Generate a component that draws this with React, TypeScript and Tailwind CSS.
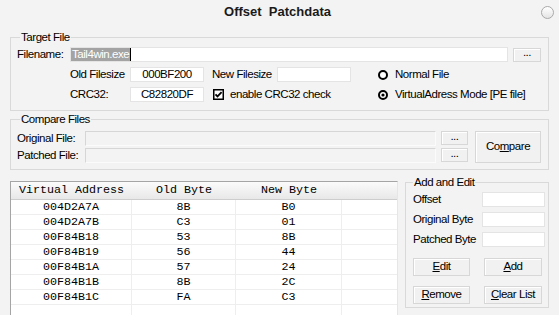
import React from "react";

const UI = "font-['Liberation_Sans',Arial,sans-serif] text-[11.5px] tracking-[-0.45px]";

function Btn({ children, className = "" }: { children: React.ReactNode; className?: string }) {
  return (
    <div
      className={
        "flex items-center justify-center bg-[#f1f1f1] border border-[#d7d7d7] shadow-[inset_1px_1px_0_#ffffff] leading-none whitespace-nowrap " +
        className
      }
    >
      {children}
    </div>
  );
}

function Field({ children, className = "" }: { children?: React.ReactNode; className?: string }) {
  return (
    <div className={"h-[15px] bg-white border border-[#e4e4e4] flex items-center justify-center leading-none " + className}>
      {children}
    </div>
  );
}

function Radio({ checked }: { checked?: boolean }) {
  return (
    <svg width="10" height="10" viewBox="0 0 10 10" className="shrink-0">
      <circle cx="5" cy="5" r="4" fill="white" stroke="black" strokeWidth="2" />
      {checked && <circle cx="5" cy="5" r="1.6" fill="black" />}
    </svg>
  );
}

function Check() {
  return (
    <svg width="11" height="11" viewBox="0 0 11 11" className="shrink-0">
      <rect x="0.75" y="0.75" width="9.5" height="9.5" fill="white" stroke="black" strokeWidth="1.5" />
      <path d="M2.5 5.3 L4.5 7.4 L8.6 3.2" fill="none" stroke="black" strokeWidth="1.8" />
    </svg>
  );
}

export default function App() {
  const rows = [
    ["004D2A7A", "8B", "B0"],
    ["004D2A7B", "C3", "01"],
    ["00F84B18", "53", "8B"],
    ["00F84B19", "56", "44"],
    ["00F84B1A", "57", "24"],
    ["00F84B1B", "8B", "2C"],
    ["00F84B1C", "FA", "C3"],
    ["", "", ""],
  ];
  const mono = "font-['Liberation_Mono','Courier_New',monospace] text-[11.7px] tracking-normal";
  return (
    <div className={"w-[559px] h-[315px] bg-[#f3f3f3] overflow-hidden relative text-black whitespace-nowrap " + UI}>
      {/* title */}
      <div className="h-[30px] pt-[4px] flex justify-center pr-[4px]">
        <span className="font-['Liberation_Sans',sans-serif] font-bold text-[13px] tracking-normal leading-[16px] whitespace-pre text-[#1a1a1a]">
          Offset  Patchdata
        </span>
      </div>
      <div className="absolute left-[541px] top-[6px] w-[13px] h-[13px] rounded-full border border-[#a9a9a9] bg-linear-to-b from-white to-[#e4e4e4]" />

      {/* Target File */}
      <fieldset className="mx-[10px] border border-[#d9d9d9] pl-[6px] pr-[7px] pt-[3px] pb-[8px]">
        <legend className="ml-[3px] px-[1px] leading-[14px]">Target File</legend>
        <div className="flex items-center h-[15px]">
          <div className="w-[53px]">Filename:</div>
          <div className="flex-1 h-[15px] bg-white border border-[#e4e4e4] flex items-stretch">
            <span className="bg-[#a3a3a3] text-white leading-[13px] pl-[1px] pr-[1px]">Tail4win.exe</span>
            <span className="w-[1px] bg-black" />
          </div>
          <Btn className="ml-[5px] w-[28px] h-[14px] pb-[3px]">...</Btn>
        </div>
        <div className="flex items-center h-[15px] mt-[5px] pl-[53px]">
          <div className="w-[60px]">Old Filesize</div>
          <Field className="w-[74px]">000BF200</Field>
          <div className="w-[65px] ml-[8px]">New Filesize</div>
          <Field className="w-[74px]" />
          <div className="ml-[27px] flex items-center gap-[7px]">
            <Radio />
            <span>Normal File</span>
          </div>
        </div>
        <div className="flex items-center h-[15px] mt-[5px] pl-[53px]">
          <div className="w-[60px]">CRC32:</div>
          <Field className="w-[74px]">C82820DF</Field>
          <div className="w-[174px] pl-[9px] flex items-center gap-[6px]">
            <Check />
            <span>enable CRC32 check</span>
          </div>
          <div className="flex items-center gap-[7px]">
            <Radio checked />
            <span>VirtualAdress Mode [PE file]</span>
          </div>
        </div>
      </fieldset>

      {/* Compare Files */}
      <fieldset className="mt-[1px] mx-[10px] border border-[#d9d9d9] pl-[6px] pr-[7px] pt-[5px] pb-[6px]">
        <legend className="ml-[3px] px-[1px] leading-[14px]">Compare Files</legend>
        <div className="flex">
          <div className="flex-1 flex flex-col gap-[2px]">
            <div className="flex items-center h-[15px]">
              <div className="w-[68px]">Original File:</div>
              <div className="flex-1 h-[15px] border-t border-l border-[#d6d6d6] border-r-[#fbfbfb] border-b-[#fbfbfb] border-r border-b" />
            </div>
            <div className="flex items-center h-[15px]">
              <div className="w-[68px]">Patched File:</div>
              <div className="flex-1 h-[15px] border-t border-l border-[#d6d6d6] border-r-[#fbfbfb] border-b-[#fbfbfb] border-r border-b" />
            </div>
          </div>
          <div className="ml-[5px] w-[27px] flex flex-col gap-[3px]">
            <Btn className="h-[14px] pb-[3px]">...</Btn>
            <Btn className="h-[14px] pb-[3px]">...</Btn>
          </div>
          <Btn className="ml-[7px] w-[66px] h-[32px]">
            <span>
              Co<span className="underline">m</span>pare
            </span>
          </Btn>
        </div>
      </fieldset>

      {/* Bottom */}
      <div className="flex items-start mx-[10px]">
        <div className="mt-[11px] w-[388px] h-[200px] bg-white border-t border-l border-[#a5a5a5] border-r border-r-[#e6e6e6]">
          <div className={"grid grid-cols-[121px_104px_106px_55px] h-[18px] border-b border-[#cdcdcd] bg-linear-to-b from-[#fbfbfb] to-[#e8e8e8] items-center " + mono}>
            <div className="text-center">Virtual Address</div>
            <div className="text-center">Old Byte</div>
            <div className="text-center">New Byte</div>
            <div />
          </div>
          {rows.map((r, i) => (
            <div key={i} className={"grid grid-cols-[121px_104px_106px_55px] h-[15px] border-b border-[#eeeeee] " + mono}>
              <div className="text-center border-r border-[#eeeeee] leading-[14px]">{r[0]}</div>
              <div className="text-center border-r border-[#eeeeee] leading-[14px]">{r[1]}</div>
              <div className="text-center border-r border-[#eeeeee] leading-[14px]">{r[2]}</div>
              <div />
            </div>
          ))}
        </div>

        <fieldset className="mt-[5px] ml-[7px] w-[144px] border border-[#d9d9d9] pl-[7px] pr-[3px] pt-[3px] pb-[3px]">
          <legend className="ml-[0px] px-[1px] leading-[14px]">Add and Edit</legend>
          <div className="flex flex-col gap-[5px]">
            <div className="flex items-center h-[15px]">
              <div className="w-[69px]">Offset</div>
              <Field className="w-[63px]" />
            </div>
            <div className="flex items-center h-[15px]">
              <div className="w-[69px]">Original Byte</div>
              <Field className="w-[63px]" />
            </div>
            <div className="flex items-center h-[15px]">
              <div className="w-[69px]">Patched Byte</div>
              <Field className="w-[63px]" />
            </div>
          </div>
          <div className="flex mt-[11px]">
            <Btn className="w-[57px] h-[18px]">
              <span>
                <span className="underline">E</span>dit
              </span>
            </Btn>
            <Btn className="w-[58px] h-[18px] ml-[14px]">
              <span>
                <span className="underline">A</span>dd
              </span>
            </Btn>
          </div>
          <div className="flex mt-[10px]">
            <Btn className="w-[57px] h-[18px]">
              <span>
                <span className="underline">R</span>emove
              </span>
            </Btn>
            <Btn className="w-[58px] h-[18px] ml-[14px]">
              <span>
                <span className="underline">C</span>lear List
              </span>
            </Btn>
          </div>
        </fieldset>
      </div>
    </div>
  );
}
